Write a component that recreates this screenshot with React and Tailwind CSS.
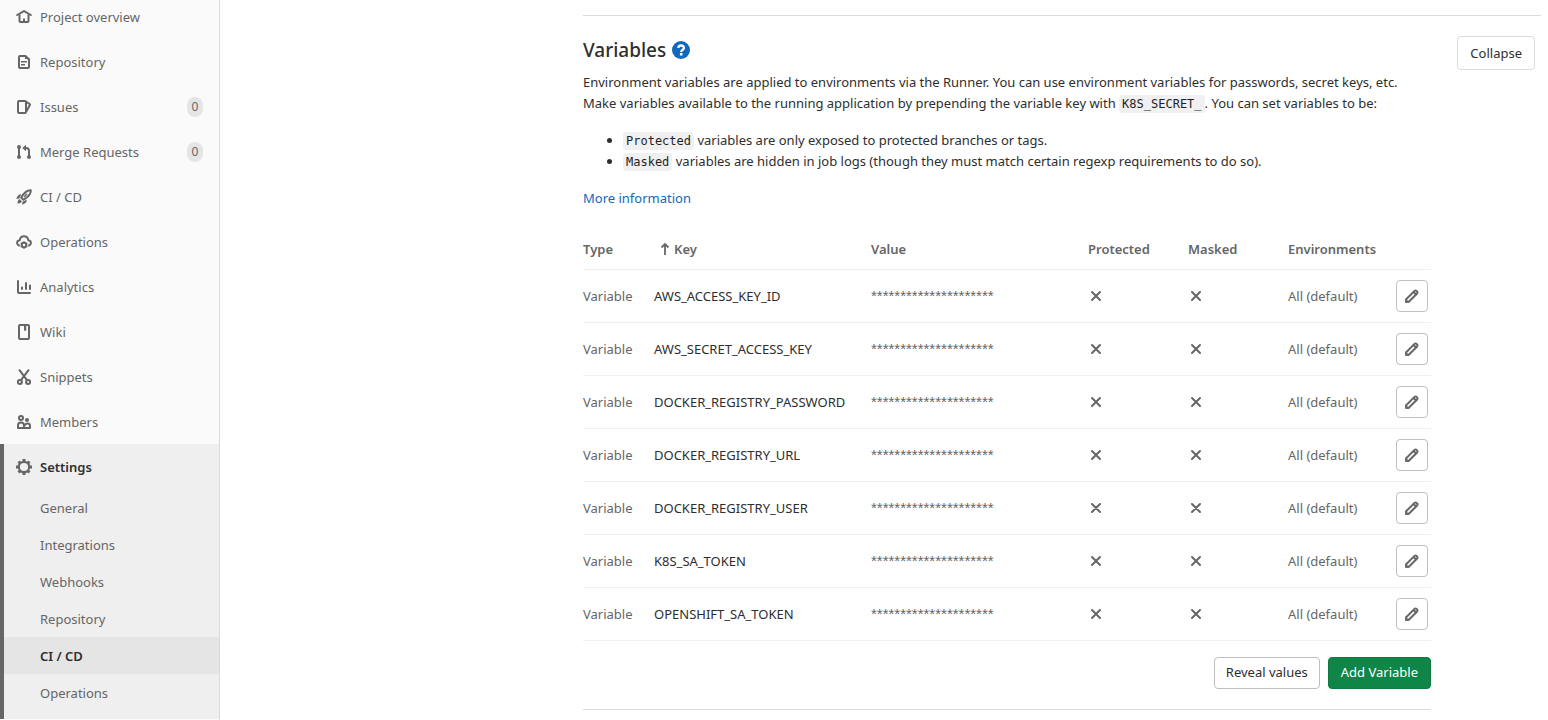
const stroke = {
  fill: 'none',
  stroke: 'currentColor',
  strokeWidth: 2,
  strokeLinejoin: 'round',
  strokeLinecap: 'round',
};

function Icon({ children }) {
  return (
    <svg viewBox="0 0 16 16" className="size-4 shrink-0" aria-hidden="true">
      {children}
    </svg>
  );
}

const HomeIcon = () => (
  <Icon>
    <path {...stroke} d="M1.200 6 7.400 2.300q.6-.4 1.200 0L14.800 6" />
    <path {...stroke} strokeLinecap="butt" d="M3.500 5.500V12q0 1 1 1h7q1 0 1-1V5.500" />
    <path d="M7 9.500h2V13H7z" fill="currentColor" />
  </Icon>
);

const DocIcon = () => (
  <Icon>
    <path {...stroke} d="M4 2h5.500L13 5.500V13q0 1-1 1H4q-1 0-1-1V3q0-1 1-1z" />
    <path {...stroke} strokeWidth="1.600" strokeLinecap="butt" d="M5 7.800h6M5 10.800h4" />
    <path d="M9 1v4h5z" fill="currentColor" />
  </Icon>
);

const IssuesIcon = () => (
  <Icon>
    <rect {...stroke} x="2" y="2" width="8" height="12" rx="1" />
    <path {...stroke} d="m10.500 3.200 3 1.600q.8.500.4 1.300L10.600 12" />
  </Icon>
);

const MergeIcon = () => (
  <Icon>
    <path {...stroke} d="M3 3v10M13 13V7q0-3-3-3" />
    <circle cx="3" cy="3" r="2" fill="currentColor" />
    <circle cx="3" cy="13" r="2" fill="currentColor" />
    <circle cx="13" cy="13" r="2" fill="currentColor" />
    <path d="M10 .8v6.400L6.300 4z" fill="currentColor" />
  </Icon>
);

const RocketIcon = () => (
  <Icon>
    <path {...stroke} d="M14.800 1.200C10.500 1 7.800 3.800 5.200 8.600l2.200 2.200c4.800-2.600 7.600-5.300 7.400-9.600z" />
    <path {...stroke} strokeWidth="1.500" d="m8.500 7.500 2.200-2.200" />
    <path d="M5.200 5.200C3 5 1.200 6.400.3 10l3-.6zM10.800 10.800c.2 2.200-1.200 4-4.800 4.900l.6-3zM3.500 10l2.500 2.500c-1 1.500-2.500 2-4.500 2 0-2 .5-3.500 2-4.500z" fill="currentColor" />
  </Icon>
);

const CloudGearIcon = () => (
  <Icon>
    <path {...stroke} d="M3 11.500C.3 10.400.4 6.800 3.700 6.300 4.500 1 11.500 1 12.300 6.300c3.300.5 3.400 4.100.7 5.200" />
    <circle cx="8" cy="11" r="2.300" {...stroke} />
    <path {...stroke} strokeWidth="1.500" strokeLinecap="butt" d="M8 7.200v1.500M8 13.300v1.500M4.700 9.100l1.300.8M10 12.100l1.300.8M11.300 9.100l-1.300.8M6 12.100l-1.300.8" />
  </Icon>
);

const ChartIcon = () => (
  <Icon>
    <path {...stroke} d="M2 2v11q0 1 1 1h11" />
    <path {...stroke} d="M6 8.500V10M10 4v6M14 6.500V10" />
  </Icon>
);

const BookIcon = () => (
  <Icon>
    <rect {...stroke} x="3" y="1" width="10" height="14" rx="1" />
    <path d="M8 1h2.200v6L9.100 6.200 8 7z" fill="currentColor" />
  </Icon>
);

const ScissorsIcon = () => (
  <Icon>
    <path {...stroke} d="m3.500 1.200 7.300 9.600M12.500 1.200 5.200 10.800" />
    <circle {...stroke} cx="3.900" cy="12.900" r="2" />
    <circle {...stroke} cx="12.100" cy="12.900" r="2" />
  </Icon>
);

const MembersIcon = () => (
  <Icon>
    <circle {...stroke} cx="5" cy="4" r="2" />
    <path {...stroke} d="M2 14v-2.500c0-4 6-4 6 0V14z" />
    <circle cx="11" cy="6" r="2" fill="currentColor" />
    <path {...stroke} d="M8.500 14H14v-2.200c0-2.500-3.600-3-4.800-1.200" />
  </Icon>
);

const GearIcon = () => (
  <Icon>
    <circle {...stroke} strokeWidth="2.200" cx="8" cy="8" r="5.200" />
    <path
      {...stroke}
      strokeWidth="3"
      strokeLinecap="butt"
      d="M8 0v3M8 13v3M0 8h3M13 8h3M2.500 2.500l2 2M11.500 11.500l2 2M13.500 2.500l-2 2M4.500 11.500l-2 2"
    />
  </Icon>
);

const CrossIcon = () => (
  <svg viewBox="0 0 16 16" className="size-4" role="img" aria-label="No">
    <path {...stroke} d="m4 4 8 8M12 4l-8 8" />
  </svg>
);

const PencilIcon = () => (
  <Icon>
    <path {...stroke} d="M2.200 13.800v-2.600l8.300-8.300q1-1 2 0l.6.600q1 1 0 2l-8.300 8.300z" />
    <path {...stroke} d="m9.800 4.200 2 2" />
    <path d="M1.200 10.500v4.300h4.300z" fill="currentColor" />
  </Icon>
);

const SortIcon = () => (
  <svg viewBox="0 0 10 14" className="h-3.5 w-2.5" aria-hidden="true">
    <path {...stroke} strokeWidth="1.800" strokeLinecap="butt" strokeLinejoin="miter" d="M5 13V2M1.500 5.500 5 2l3.500 3.500" />
  </svg>
);

const HelpIcon = () => (
  <svg viewBox="0 0 18 18" className="size-[18px]" aria-hidden="true">
    <circle cx="9" cy="9" r="9" fill="#1068bf" />
    <path d="M6.300 6.900C6.500 3.500 12 3.700 11.900 7c-.1 1.900-2.700 1.900-2.700 3.900" fill="none" stroke="#fff" strokeWidth="2.400" />
    <path d="M7.900 12h2.600v2.500H7.900z" fill="#fff" />
  </svg>
);

const navItems = [
  { label: 'Project overview', icon: HomeIcon },
  { label: 'Repository', icon: DocIcon },
  { label: 'Issues', icon: IssuesIcon, count: 0 },
  { label: 'Merge Requests', icon: MergeIcon, count: 0 },
  { label: 'CI / CD', icon: RocketIcon },
  { label: 'Operations', icon: CloudGearIcon },
  { label: 'Analytics', icon: ChartIcon },
  { label: 'Wiki', icon: BookIcon },
  { label: 'Snippets', icon: ScissorsIcon },
  { label: 'Members', icon: MembersIcon },
];

const settingsItems = ['General', 'Integrations', 'Webhooks', 'Repository', 'CI / CD', 'Operations'];

const variables = [
  'AWS_ACCESS_KEY_ID',
  'AWS_SECRET_ACCESS_KEY',
  'DOCKER_REGISTRY_PASSWORD',
  'DOCKER_REGISTRY_URL',
  'DOCKER_REGISTRY_USER',
  'K8S_SA_TOKEN',
  'OPENSHIFT_SA_TOKEN',
];

function Sidebar() {
  return (
    <nav aria-label="Project" className="w-[220px] shrink-0 overflow-hidden border-r border-[#dbdbdb] bg-[#fafafa] leading-[22px] text-[#666]">
      <ul className="-mt-1.5">
        {navItems.map(({ label, icon: Glyph, count }) => (
          <li key={label}>
            <a href="#" className="flex h-[45px] items-center gap-2 pr-4 pl-4">
              <Glyph />
              <span className="grow">{label}</span>
              {count !== undefined && (
                <span className="flex h-5 w-4 items-center justify-center rounded-full bg-[#e5e5e5] text-xs">{count}</span>
              )}
            </a>
          </li>
        ))}
        <li className="border-l-4 border-[#666] bg-[#efefef] pb-2">
          <a href="#" className="flex h-[45px] items-center gap-2 pl-3">
            <GearIcon />
            <span className="font-semibold text-[#2e2e2e]">Settings</span>
          </a>
          <ul>
            {settingsItems.map((label) => (
              <li key={label}>
                <a
                  href="#"
                  className={
                    label === 'CI / CD'
                      ? 'flex h-[37px] items-center bg-[#e5e5e5] pl-9 font-semibold text-[#2e2e2e]'
                      : 'flex h-[37px] items-center pl-9'
                  }
                >
                  {label}
                </a>
              </li>
            ))}
          </ul>
        </li>
      </ul>
    </nav>
  );
}

function Code({ children }) {
  return (
    <code className="rounded bg-[#f0f0f0] px-[3px] py-0.5 font-['DejaVu_Sans_Mono',monospace] text-xs leading-none text-[#1f1f1f]">
      {children}
    </code>
  );
}

function VariablesTable() {
  return (
    <table className="mt-5 w-full table-fixed text-left leading-[22px] text-[#666]">
      <colgroup>
        <col className="w-[71px]" />
        <col className="w-[217px]" />
        <col />
        <col className="w-[100px]" />
        <col className="w-[100px]" />
        <col className="w-[108px]" />
        <col className="w-[35px]" />
      </colgroup>
      <thead>
        <tr className="h-10 border-b border-[#f0f0f0]">
          <th className="font-semibold">Type</th>
          <th className="font-semibold">
            <button type="button" className="flex items-center gap-1 pl-1.5 font-semibold">
              <SortIcon />
              Key
            </button>
          </th>
          <th className="font-semibold">Value</th>
          <th className="font-semibold">Protected</th>
          <th className="font-semibold">Masked</th>
          <th className="font-semibold">Environments</th>
          <th aria-label="Actions" />
        </tr>
      </thead>
      <tbody>
        {variables.map((name) => (
          <tr key={name} className="h-[53px] border-b border-[#f0f0f0]">
            <td>Variable</td>
            <td className="text-[#2e2e2e]">{name}</td>
            <td className="font-['Liberation_Sans',sans-serif] text-[15px]">*********************</td>
            <td><CrossIcon /></td>
            <td><CrossIcon /></td>
            <td>All (default)</td>
            <td>
              <button
                type="button"
                aria-label={`Edit ${name}`}
                className="flex size-8 items-center justify-center rounded border border-[#bfbfbf] bg-white"
              >
                <PencilIcon />
              </button>
            </td>
          </tr>
        ))}
      </tbody>
    </table>
  );
}

export default function App() {
  return (
    <div className="flex min-h-screen bg-white font-['Noto_Sans','Open_Sans',sans-serif] text-[13px] leading-[21px] text-[#2e2e2e]">
      <Sidebar />
      <main className="min-w-0 grow pt-[15px] pr-[7px] pl-[363px]">
        <section className="border-t border-[#dbdbdb]">
          <div className="flex items-start justify-between pt-5 pr-1.5">
            <div className="w-[848px]">
              <h2 className="flex h-7 items-center gap-1.5 text-[19px] font-medium">
                Variables
                <a href="#" aria-label="Help"><HelpIcon /></a>
              </h2>
              <p className="mt-2">
                Environment variables are applied to environments via the Runner. You can use environment variables for passwords, secret keys, etc.
                <br />
                Make variables available to the running application by prepending the variable key with <Code>K8S_SECRET_</Code>. You can set variables to be:
              </p>
              <ul className="mt-4 list-disc pl-10">
                <li><Code>Protected</Code> variables are only exposed to protected branches or tags.</li>
                <li><Code>Masked</Code> variables are hidden in job logs (though they must match certain regexp requirements to do so).</li>
              </ul>
              <a href="#" className="mt-4 block w-fit text-[#1068bf]">More information</a>
              <VariablesTable />
              <div className="mt-4 flex justify-end gap-2 border-b border-[#dbdbdb] pb-5">
                <button type="button" className="h-8 rounded border border-[#bfbfbf] bg-white px-[11px]">Reveal values</button>
                <button type="button" className="h-8 rounded border border-[#0e7a3f] bg-[#108548] px-3 text-white">Add Variable</button>
              </div>
            </div>
            <button type="button" className="h-[34px] rounded border border-[#dbdbdb] bg-white px-3">Collapse</button>
          </div>
        </section>
      </main>
    </div>
  );
}
